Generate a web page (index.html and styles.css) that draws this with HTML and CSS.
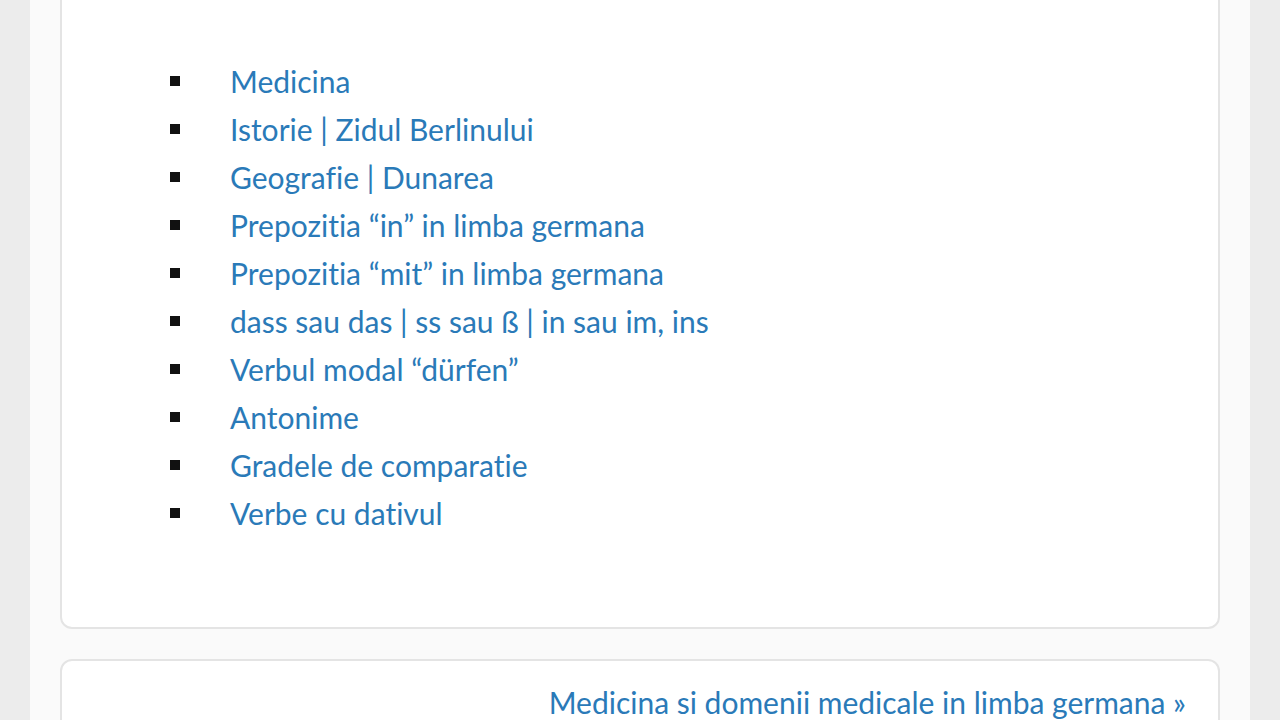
FILE: index.html
```html
<!DOCTYPE html>
<html lang="ro">
<head>
<meta charset="UTF-8">
<meta name="viewport" content="width=device-width, initial-scale=1.0">
<title>Limba germana</title>
<link rel="stylesheet" href="styles.css">
</head>
<body>
<div class="site">
<div class="card list-card">
<ul class="topic-list">
<li><a href="#">Medicina</a></li>
<li><a href="#">Istorie | Zidul Berlinului</a></li>
<li><a href="#">Geografie | Dunarea</a></li>
<li><a href="#">Prepozitia “in” in limba germana</a></li>
<li><a href="#">Prepozitia “mit” in limba germana</a></li>
<li><a href="#">dass sau das | ss sau ß | in sau im, ins</a></li>
<li><a href="#">Verbul modal “dürfen”</a></li>
<li><a href="#">Antonime</a></li>
<li><a href="#">Gradele de comparatie</a></li>
<li><a href="#">Verbe cu dativul</a></li>
</ul>
</div>
<div class="card nav-card">
<a href="#" class="next-link">Medicina si domenii medicale in limba germana »</a>
</div>
</div>
</body>
</html>
```

FILE: styles.css
```css
* {
margin: 0;
padding: 0;
box-sizing: border-box;
}
body {
background-color: #ececec;
font-family: Lato, 'Open Sans', sans-serif;
font-variant-ligatures: none;
height: 720px;
overflow: hidden;
}
.site {
width: 1220px;
margin: 0 auto;
background: #fafafa;
padding: 0 30px;
height: 760px;
margin-top: -20px;
}
.card {
background: #fff;
border: 2px solid #e4e4e4;
border-radius: 12px;
}
.list-card {
border-top-left-radius: 0;
border-top-right-radius: 0;
padding: 75px 0 90px 108px;
}
.topic-list {
list-style: none;
}
.topic-list li {
display: flex;
align-items: center;
height: 48px;
font-size: 30px;
}
.topic-list li::before {
content: '';
width: 10px;
height: 10px;
background: #111;
margin-right: 50px;
flex-shrink: 0;
}
a {
color: #2a7ab8;
text-decoration: none;
}
.nav-card {
margin-top: 30px;
padding: 23px 32px 20px 32px;
text-align: right;
font-size: 30px;
}
```
